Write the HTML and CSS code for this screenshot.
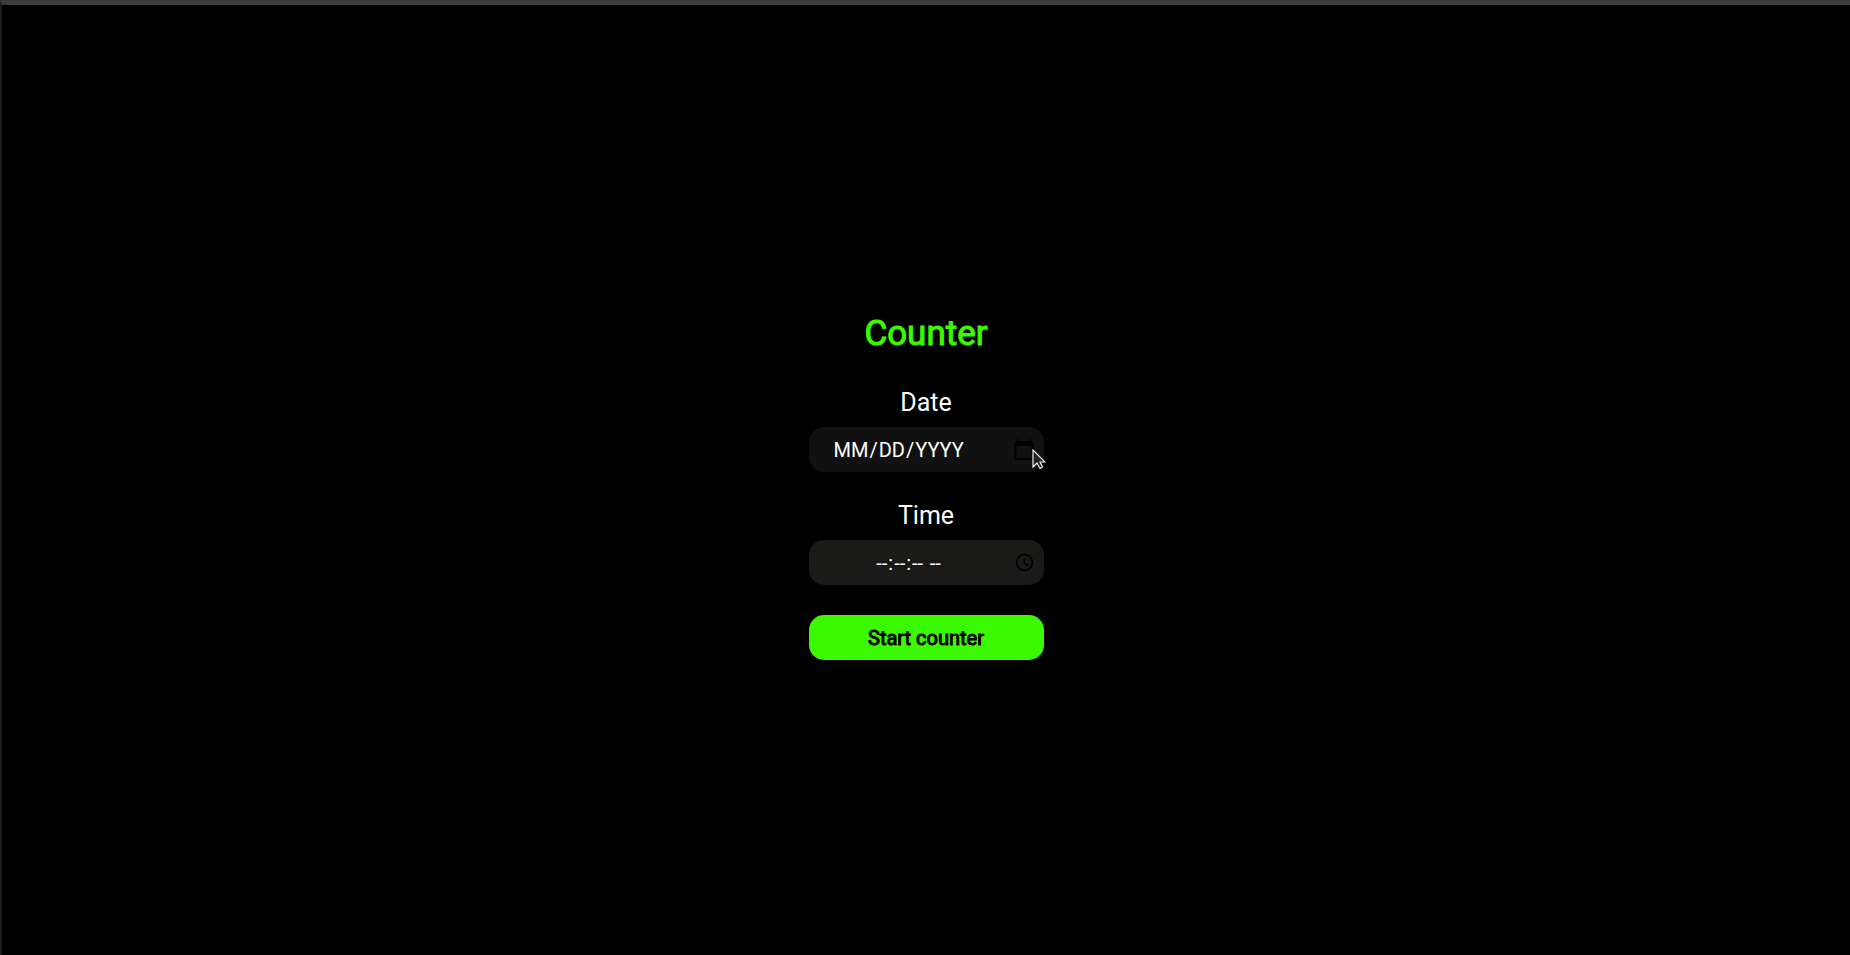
FILE: index.html
```html
<!DOCTYPE html>
<html lang="en-US">
<head>
<meta charset="utf-8">
<title>Counter</title>
<link rel="stylesheet" href="styles.css">
</head>
<body>
<main class="page">
  <form class="counter">
    <h1 class="title">Counter</h1>
    <label class="label" for="date">Date</label>
    <input class="field field-date" type="date" id="date">
    <label class="label" for="time">Time</label>
    <input class="field field-time" type="time" step="1" id="time">
    <button class="start" type="button">Start counter</button>
  </form>
</main>
<svg class="cursor" width="14" height="21" viewBox="0 0 14 21" aria-hidden="true">
  <path d="M1 1V18L5 14L8 19.500L10.500 18L8 13H13Z" fill="#222" stroke="#eee" stroke-width="1.200"/>
</svg>
</body>
</html>
```
FILE: styles.css
```css
* {
  box-sizing: border-box;
}

body {
  margin: 0;
  background: #000;
  color: #fff;
  font-family: Roboto, sans-serif;
}

.page {
  min-height: 100vh;
  padding-top: 14px;
  display: flex;
  align-items: center;
  justify-content: center;
  border-top: 5px solid #3c3c3c;
  border-left: 2px solid #1c1c1a;
}

.counter {
  width: 235px;
  display: flex;
  flex-direction: column;
  text-align: center;
}

.title {
  margin: 0 0 33px;
  color: #3bf900;
  font-size: 35px;
  line-height: 40px;
  font-weight: 400;
  -webkit-text-stroke: 1px #3bf900;
}

.label {
  margin-bottom: 8px;
  font-size: 25px;
  line-height: 32px;
}

.field {
  width: 100%;
  height: 45px;
  margin: 0 0 28px;
  border: 0;
  border-radius: 15px;
  color: #fff;
  font-family: inherit;
  font-size: 20px;
}

.field-date {
  padding: 0 6px 0 24px;
  background: #111;
  text-transform: uppercase;
}

.field-date::-webkit-calendar-picker-indicator {
  width: 24px;
  height: 24px;
}

.field-time {
  margin-bottom: 30px;
  padding: 0 6px;
  background: #1a1a18;
  text-align: center;
}

.field-time::-webkit-calendar-picker-indicator {
  width: 21px;
  height: 21px;
}

.field-time::-webkit-datetime-edit-ampm-field {
  padding-left: 3px;
}

.start {
  height: 45px;
  border: 0;
  border-radius: 15px;
  background: #3bf900;
  color: #000;
  font-family: inherit;
  font-size: 20px;
  -webkit-text-stroke: 1px #000;
}

.cursor {
  position: absolute;
  left: 1032px;
  top: 449px;
}
```
